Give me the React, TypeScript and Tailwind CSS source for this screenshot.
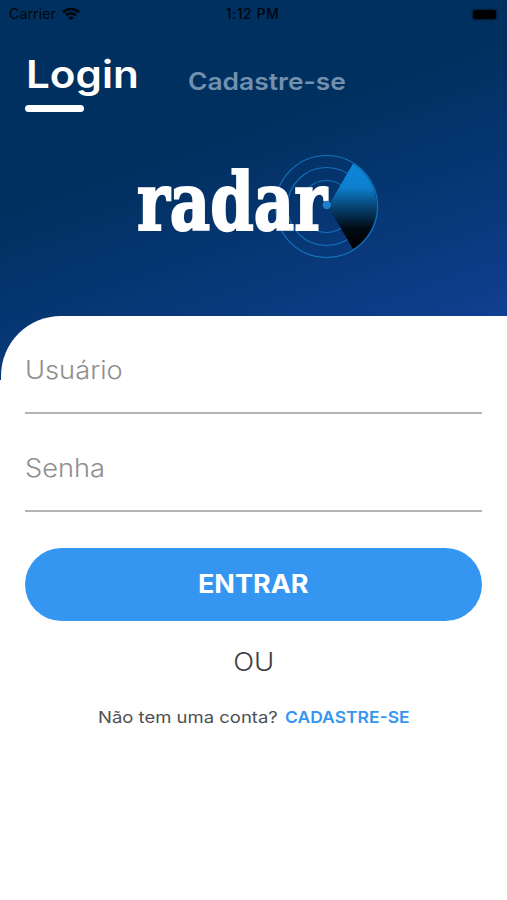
function StatusBar() {
  return (
    <div className="flex h-7 items-center justify-between pl-[9px] pr-[11px] text-[#01060d]">
      <div className="flex w-[90px] items-center gap-[6px]">
        <span className="text-[14px] leading-7 tracking-[0.15px]">Carrier</span>
        <svg width="18" height="14" viewBox="0 0 18 14" fill="none" stroke="currentColor" strokeWidth="2.7">
          <path d="M1 5.2C5.4 .9 12.6 .9 17 5.2" />
          <path d="M4 8.3C6.8 5.6 11.2 5.6 14 8.3" />
          <path d="M6.2 10.5C7.8 9 10.2 9 11.8 10.5L9 13.3Z" fill="currentColor" stroke="none" />
        </svg>
      </div>
      <span className="text-[14px] font-medium leading-7 tracking-[0.5px]">1:12 PM</span>
      <div className="flex w-[90px] justify-end">
        <div className="h-[9px] w-[23px] rounded-[2px] bg-black shadow-[0_0_2px_1px_rgba(0,0,0,0.4)]" />
      </div>
    </div>
  );
}

function Logo() {
  return (
    <svg className="block h-[140px] w-[270px]" viewBox="122 136 270 140" role="img" aria-label="radar">
      <defs>
        <linearGradient id="sweep" x1="0" y1="163" x2="0" y2="249" gradientUnits="userSpaceOnUse">
          <stop offset="0" stopColor="#0e86d8" />
          <stop offset="0.28" stopColor="#0e80d0" />
          <stop offset="0.52" stopColor="#06416f" />
          <stop offset="0.76" stopColor="#010a14" />
          <stop offset="1" stopColor="#000" />
        </linearGradient>
      </defs>
      <g fill="none" stroke="#1373bd" strokeWidth="1.2">
        <circle cx="326.5" cy="206.5" r="51" />
        <circle cx="326.5" cy="206.5" r="39" />
        <circle cx="326.5" cy="206.5" r="26" />
      </g>
      <path d="M328 206.5L353 163.5A50.5 50.5 0 0 1 353 249Z" fill="url(#sweep)" />
      <text
        x="137"
        y="230"
        textLength="190"
        lengthAdjust="spacingAndGlyphs"
        fill="#fff"
        stroke="#fff"
        strokeWidth="2.2"
        fontSize="81"
        fontWeight="700"
        fontFamily="'DejaVu Serif', serif"
      >
        radar
      </text>
      <circle cx="326.8" cy="205" r="4.2" fill="#1f7fcc" />
    </svg>
  );
}

function Field({ label }: { label: string }) {
  return (
    <div className="h-[98px] border-b-2 border-[#b4b4b4] pt-[38px] text-[25px] font-light leading-[32px] text-[#8f8f8f]">
      <span className="inline-block origin-left scale-x-[1.09]">{label}</span>
    </div>
  );
}

export default function App() {
  return (
    <div className="flex h-[900px] w-[507px] flex-col overflow-hidden bg-white font-['Inter','Liberation_Sans',sans-serif]">
      <header className="h-[380px] shrink-0 bg-[linear-gradient(161deg,#00305f_0%,#00305f_38%,#083878_66%,#104092_90%)]">
        <StatusBar />
        <nav className="flex pl-[25px]">
          <div className="w-[163px]">
            <div className="ml-px w-fit origin-left scale-x-[1.11] pt-[22px] text-[38px] font-semibold leading-[48px] text-white">
              Login
            </div>
            <div className="mt-[7px] h-[7px] w-[59px] rounded-full bg-white" />
          </div>
          <div className="w-fit origin-left scale-x-[1.1] pt-[38px] text-[24px] font-semibold leading-[32px] text-[#7291ae]">
            Cadastre-se
          </div>
        </nav>
        <div className="mt-[24px] pl-[122px]">
          <Logo />
        </div>
      </header>
      <main className="relative -mt-[64px] ml-px flex-1 rounded-tl-[60px] bg-white pl-[24px] pr-[25px]">
        <Field label="Usuário" />
        <Field label="Senha" />
        <button className="mt-9 block h-[73px] w-full rounded-full bg-[#3496f1] text-[25px] font-bold text-white">
          <span className="inline-block scale-x-[1.08]">ENTRAR</span>
        </button>
        <div className="mt-[25px] text-center text-[25px] font-light leading-[32px] text-[#3f4145]">
          <span className="inline-block scale-x-[1.1]">OU</span>
        </div>
        <div className="mt-[27px] flex pl-[73px] text-[16.5px] leading-6 text-[#4d4f54]">
          <span className="w-[187px]">
            <span className="inline-block origin-left scale-x-[1.12] whitespace-nowrap">Não tem uma conta?</span>
          </span>
          <span className="origin-left scale-x-[1.06] font-semibold text-[#3496f1]">CADASTRE-SE</span>
        </div>
      </main>
    </div>
  );
}
